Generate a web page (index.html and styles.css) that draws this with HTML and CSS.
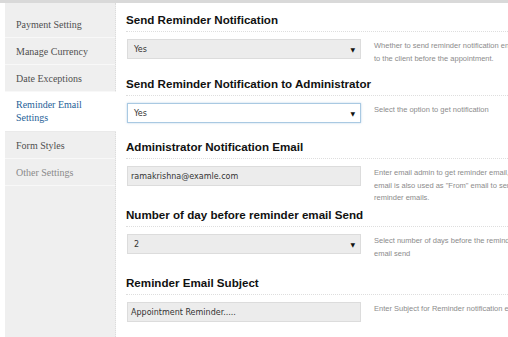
FILE: index.html
```html
<!DOCTYPE html>
<html>
<head>
<meta charset="utf-8">
<link rel="stylesheet" href="styles.css">
</head>
<body>
<div class="topbar"></div>
<div class="layout">
  <nav class="sidebar">
    <div class="item first">Payment Setting</div>
    <div class="item">Manage Currency</div>
    <div class="item">Date Exceptions</div>
    <div class="item active">Reminder Email<br>Settings</div>
    <div class="item">Form Styles</div>
    <div class="item muted">Other Settings</div>
  </nav>
  <main class="main">
    <section class="section">
      <h2 class="heading">Send Reminder Notification</h2>
      <div class="row">
        <div class="field select"><span>Yes</span><span class="arrow">&#9660;</span></div>
        <p class="desc">Whether to send reminder notification enabled<br>to the client before the appointment.</p>
      </div>
    </section>
    <section class="section short">
      <h2 class="heading">Send Reminder Notification to Administrator</h2>
      <div class="row">
        <div class="field select focus"><span>Yes</span><span class="arrow">&#9660;</span></div>
        <p class="desc">Select the option to get notification</p>
      </div>
    </section>
    <section class="section tall">
      <h2 class="heading">Administrator Notification Email</h2>
      <div class="row">
        <div class="field input"><span>ramakrishna@examle.com</span></div>
        <p class="desc">Enter email admin to get reminder email, this<br>email is also used as "From" email to send<br>reminder emails.</p>
      </div>
    </section>
    <section class="section tall">
      <h2 class="heading">Number of day before reminder email Send</h2>
      <div class="row">
        <div class="field select"><span>2</span><span class="arrow">&#9660;</span></div>
        <p class="desc">Select number of days before the reminder<br>email send</p>
      </div>
    </section>
    <section class="section">
      <h2 class="heading">Reminder Email Subject</h2>
      <div class="row">
        <div class="field input"><span>Appointment Reminder.....</span></div>
        <p class="desc">Enter Subject for Reminder notification email</p>
      </div>
    </section>
  </main>
</div>
</body>
</html>
```
FILE: styles.css
```css
html, body {
  margin: 0;
  padding: 0;
  background: #ffffff;
  overflow: hidden;
  width: 508px;
  height: 337px;
}
.topbar {
  height: 3px;
  background: #d9d9d9;
}
.layout {
  display: flex;
  width: 508px;
  height: 334px;
  overflow: hidden;
}
.sidebar {
  width: 110px;
  margin-left: 5px;
  background: #efefef;
  border-right: 1px dotted #dcdcdc;
  flex: none;
  font-family: "Liberation Serif", "Times New Roman", serif;
  font-size: 10px;
  color: #4f4f4f;
}
.item {
  height: 27px;
  line-height: 27px;
  padding-left: 11px;
  border-bottom: 1px solid #f8f8f8;
  box-sizing: border-box;
}
.item.first {
  height: 35px;
  line-height: 27px;
  padding-top: 8px;
}
.item.active {
  height: 40px;
  line-height: 12.5px;
  padding-top: 7px;
  background: #ffffff;
  color: #1f5f98;
  margin-right: -1px;
  border-bottom: 1px solid #eaeaea;
}
.item.muted {
  color: #8a8a8a;
}
.main {
  flex: none;
  width: 430px;
  padding-left: 10px;
  font-family: "Liberation Sans", Arial, sans-serif;
}
.section {
  margin-bottom: 8px;
}
.section.short {
  margin-bottom: 7px;
}
.section.tall {
  margin-bottom: 12px;
}
.heading {
  margin: 0;
  padding-top: 10px;
  padding-bottom: 4px;
  font-size: 11.6px;
  line-height: 14px;
  font-weight: bold;
  color: #111;
  border-bottom: 1px dotted #dedede;
}
.row {
  display: flex;
  align-items: flex-start;
  gap: 13px;
  height: 20px;
  margin-top: 7px;
  padding-left: 1px;
}
.field {
  flex: none;
  width: 234px;
  height: 20px;
  box-sizing: border-box;
  border: 1px solid #dcdcdc;
  background: #ececec;
  display: flex;
  align-items: center;
  justify-content: space-between;
  padding: 0 5px 0 6px;
  font-family: "DejaVu Sans", Verdana, sans-serif;
  font-size: 8px;
  color: #333;
}
.field.input {
  padding-left: 3px;
}
.field.focus {
  background: #ffffff;
  border-color: #a9c9e2;
  box-shadow: 0 0 2px rgba(120, 170, 210, 0.5);
}
.arrow {
  font-size: 6px;
  color: #111;
}
.desc {
  margin: 0;
  padding-top: 1px;
  font-size: 7.5px;
  line-height: 12.5px;
  color: #8c8c8c;
  white-space: nowrap;
}
```
